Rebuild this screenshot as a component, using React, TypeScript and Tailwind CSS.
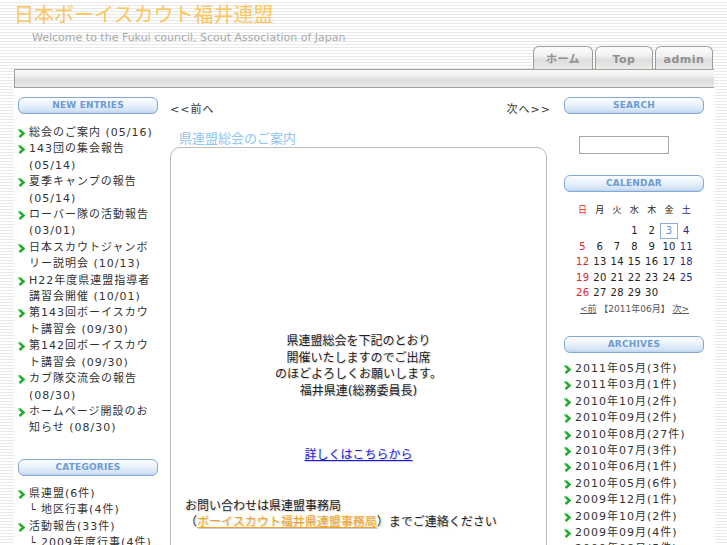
import React from "react";

const FONT = "font-['DejaVu_Sans','Noto_Sans_CJK_JP',sans-serif]";

function Bullet() {
  return (
    <svg width="8" height="9" viewBox="0 0 8 9" className="shrink-0 mt-[4px]">
      <polyline points="1.5,1 5.5,4.5 1.5,8" fill="none" stroke="#1faa2a" strokeWidth="2.4" />
      <rect x="0" y="0" width="2" height="2" fill="#7ad67f" />
    </svg>
  );
}

function SideHeader({ label }: { label: string }) {
  return (
    <div className="h-[17px] w-[140px] rounded-[6px] border border-[#84a8d6] bg-[linear-gradient(to_bottom,#fbfdff_0%,#eaf2fb_45%,#d2e2f5_85%,#bcd3ef_100%)] flex items-center justify-center">
      <span className="text-[9px] font-bold tracking-[0.2px] text-[#6d9bd4] leading-none">{label}</span>
    </div>
  );
}

const entries: { t: string; d: string }[] = [
  { t: "総会のご案内", d: "(05/16)" },
  { t: "143団の集会報告", d: "(05/14)" },
  { t: "夏季キャンプの報告", d: "(05/14)" },
  { t: "ローバー隊の活動報告", d: "(03/01)" },
  { t: "日本スカウトジャンボリー説明会", d: "(10/13)" },
  { t: "H22年度県連盟指導者講習会開催", d: "(10/01)" },
  { t: "第143回ボーイスカウト講習会", d: "(09/30)" },
  { t: "第142回ボーイスカウト講習会", d: "(09/30)" },
  { t: "カブ隊交流会の報告", d: "(08/30)" },
  { t: "ホームページ開設のお知らせ", d: "(08/30)" },
];

const archives = [
  "2011年05月(3件)",
  "2011年03月(1件)",
  "2010年10月(2件)",
  "2010年09月(2件)",
  "2010年08月(27件)",
  "2010年07月(3件)",
  "2010年06月(1件)",
  "2010年05月(6件)",
  "2009年12月(1件)",
  "2009年10月(2件)",
  "2009年09月(4件)",
  "2009年08月(5件)",
];

const weeks: (number | null)[][] = [
  [null, null, null, 1, 2, 3, 4],
  [5, 6, 7, 8, 9, 10, 11],
  [12, 13, 14, 15, 16, 17, 18],
  [19, 20, 21, 22, 23, 24, 25],
  [26, 27, 28, 29, 30, null, null],
];

function dayColor(i: number) {
  if (i === 0) return "text-[#e0252b]";
  if (i === 6) return "text-[#2b2b86]";
  return "text-[#222]";
}

export default function App() {
  return (
    <div
      className={`w-[727px] h-[545px] overflow-hidden ${FONT} bg-[image:repeating-linear-gradient(to_bottom,#ffffff_0px,#ffffff_2px,#e9e9e9_2px,#e9e9e9_3px)]`}
    >
      {/* Header */}
      <div className="h-[46px] pl-[14px] pt-[2px]">
        <div className="text-[20px] leading-[26px] text-[#fcc65a]">日本ボーイスカウト福井連盟</div>
        <div className="mt-[3px] pl-[18px] text-[11px] leading-[14px] text-[#a9a9a9]">
          Welcome to the Fukui council, Scout Association of Japan
        </div>
      </div>
      {/* Tabs */}
      <div className="h-[23px] flex justify-end gap-[2px] pr-[14px]">
        {[
          { l: "ホーム", w: "w-[60px]" },
          { l: "Top", w: "w-[58px]" },
          { l: "admin", w: "w-[58px]" },
        ].map((t) => (
          <div
            key={t.l}
            className={`${t.w} h-[23px] rounded-t-[6px] border border-b-0 border-[#a39b92] bg-[linear-gradient(to_bottom,#fdfdfd_0%,#f1f1f1_40%,#dddddd_60%,#ececec_100%)] flex justify-center pt-[6px]`}
          >
            <span className="text-[11px] font-bold leading-[14px] text-[#909090] tracking-[0.5px]">{t.l}</span>
          </div>
        ))}
      </div>
      {/* Bar */}
      <div className="ml-[14px] w-[700px] h-[19px] border-y border-l border-[#a69e95] bg-[linear-gradient(to_bottom,#fbfbfb_0%,#f0f0f0_35%,#dcdcdc_60%,#ebebeb_100%)]" />

      {/* Main */}
      <div className="ml-[14px] w-[701px] h-[460px] bg-white flex pt-[9px] pl-[4px] text-[#333]">
        {/* Left */}
        <div className="w-[140px] shrink-0">
          <SideHeader label="NEW ENTRIES" />
          <ul className="mt-[11px] text-[11px] leading-[16.4px] tracking-[1px]">
            {entries.map((e, i) => (
              <li key={i} className="flex items-start gap-[3px]">
                <Bullet />
                <span>
                  {e.t} <span className="whitespace-nowrap">{e.d}</span>
                </span>
              </li>
            ))}
          </ul>
          <div className="mt-[22px]">
            <SideHeader label="CATEGORIES" />
          </div>
          <ul className="mt-[10px] text-[11px] leading-[16.4px] tracking-[1px]">
            <li className="flex items-start gap-[3px]">
              <Bullet />
              <span>県連盟(6件)</span>
            </li>
            <li className="pl-[11px]">└ 地区行事(4件)</li>
            <li className="flex items-start gap-[3px]">
              <Bullet />
              <span>活動報告(33件)</span>
            </li>
            <li className="pl-[11px]">└ 2009年度行事(4件)</li>
          </ul>
        </div>

        {/* Center */}
        <div className="ml-[12px] w-[381px] shrink-0">
          <div className="mt-[5px] flex justify-between text-[11px] leading-[16px] tracking-[1px] text-[#333]">
            <span>&lt;&lt;前へ</span>
            <span>次へ&gt;&gt;</span>
          </div>
          <div className="mt-[13px] pl-[9px] text-[13px] leading-[16px] text-[#8fc4f3]">県連盟総会のご案内</div>
          <div className="w-[377px] h-[420px] rounded-t-[10px] border border-[#bdbdbd] px-[14px] text-[12px] text-[#222] [text-shadow:1px_1px_1px_#cfcfcf]">
            <div className="h-[185px]" />
            <p className="text-center leading-[16.5px]">
              県連盟総会を下記のとおり
              <br />
              開催いたしますのでご出席
              <br />
              のほどよろしくお願いします。
              <br />
              福井県連(総務委員長)
            </p>
            <p className="mt-[48px] text-center leading-[16.5px]">
              <a className="text-[#1a1ae6] underline">詳しくはこちらから</a>
            </p>
            <p className="mt-[34px] leading-[16.5px]">
              　お問い合わせは県連盟事務局
              <br />
              （<span className="text-[#f4a41c] underline">ボーイスカウト福井県連盟事務局</span>）までご連絡ください
            </p>
          </div>
        </div>

        {/* Right */}
        <div className="ml-[13px] w-[140px] shrink-0">
          <SideHeader label="SEARCH" />
          <input
            type="text"
            className="block mt-[22px] ml-[15px] w-[90px] h-[18px] border border-[#a9a9a9] bg-white outline-none"
          />
          <div className="mt-[21px]">
            <SideHeader label="CALENDAR" />
          </div>
          <div className="mt-[10px] ml-[10px] w-[121px] text-[10px] tracking-[0.3px]">
            <div className="grid grid-cols-7 leading-[16px] text-center">
              {["日", "月", "火", "水", "木", "金", "土"].map((d, i) => (
                <span key={d} className={`text-[9px] ${dayColor(i)}`}>{d}</span>
              ))}
            </div>
            <div className="mt-[5px]">
              {weeks.map((w, wi) => (
                <div key={wi} className="grid grid-cols-7 h-[15.6px] text-center leading-[15px]">
                  {w.map((d, i) =>
                    d === 3 ? (
                      <span key={i} className="border border-[#8fb0da] text-[#5f93cf] leading-[13px]">
                        3
                      </span>
                    ) : (
                      <span key={i} className={dayColor(i)}>
                        {d ?? ""}
                      </span>
                    )
                  )}
                </div>
              ))}
            </div>
            <div className="text-center leading-[16px] text-[9px] text-[#555] tracking-[0px]">
              <span className="underline">&lt;前</span> 【2011年06月】 <span className="underline">次&gt;</span>
            </div>
          </div>
          <div className="mt-[19px]">
            <SideHeader label="ARCHIVES" />
          </div>
          <ul className="mt-[8px] text-[11px] leading-[16.4px] tracking-[1px]">
            {archives.map((a) => (
              <li key={a} className="flex items-start gap-[3px]">
                <Bullet />
                <span>{a}</span>
              </li>
            ))}
          </ul>
        </div>
      </div>
    </div>
  );
}
